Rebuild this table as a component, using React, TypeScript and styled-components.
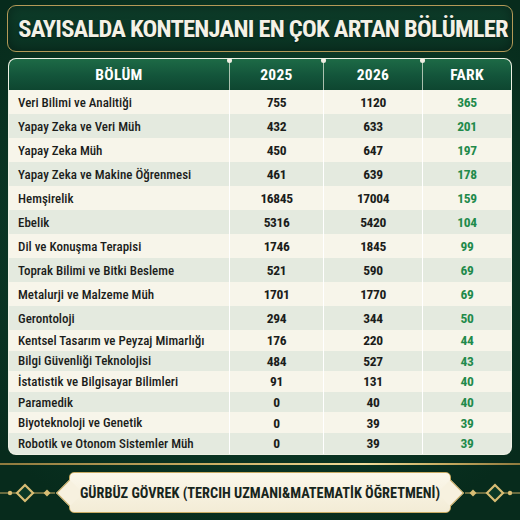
import styled, { createGlobalStyle } from "styled-components";

const GlobalStyle = createGlobalStyle`
    body {
        margin: 0;
        background: #093523;
    }
`;

const Page = styled.div`
    width: 520px;
    height: 520px;
    box-sizing: border-box;
    padding-top: 5px;
    display: flex;
    flex-direction: column;
    overflow: hidden;
    font-family: "Roboto", "Liberation Sans", sans-serif;
    font-stretch: 75%;
    background:
        radial-gradient(ellipse 70% 60% at 50% 45%, #0f4931 0%, #0b3926 55%, #072b1c 100%);
`;

const TitleBox = styled.div`
    margin: 0 7px;
    height: 47px;
    box-sizing: border-box;
    border: 1px solid #b49a58;
    border-radius: 9px;
    display: flex;
    align-items: center;
    justify-content: center;
    padding-left: 6px;
    background: linear-gradient(180deg, #0d3c29 0%, #0a3222 100%);
    box-shadow: inset 0 0 12px rgba(0, 0, 0, 0.35);
`;

const Title = styled.h1`
    margin: 0;
    font-size: 24.5px;
    font-weight: 700;
    letter-spacing: -0.75px;
    color: #f4f1e6;
    white-space: nowrap;
    text-shadow: 0 1px 2px rgba(0, 0, 0, 0.5);
`;

const Table = styled.div`
    margin: 6px 8px 0;
    border: 1px solid rgba(235, 240, 225, 0.75);
    border-radius: 8px;
    overflow: hidden;
    background: #f6f4e9;
`;

const columns = `220px 94px 99px 1fr`;

const HeaderRow = styled.div`
    display: grid;
    grid-template-columns: ${columns};
    height: 31px;
    background: linear-gradient(180deg, #1d6a46 0%, #13543a 55%, #0e4630 100%);
`;

const HeadCell = styled.div<{ $first?: boolean }>`
    position: relative;
    display: flex;
    align-items: center;
    justify-content: center;
    color: #ffffff;
    font-size: 15.5px;
    font-weight: 700;
    letter-spacing: 0.3px;
    border-left: ${(p) => (p.$first ? "none" : "1px solid rgba(235, 240, 225, 0.7)")};

    &::before {
        content: "";
        display: ${(p) => (p.$first ? "none" : "block")};
        position: absolute;
        left: -3px;
        top: -1px;
        width: 5px;
        height: 5px;
        border-radius: 50%;
        background: #f1efe4;
    }
`;

const Row = styled.div<{ $alt: boolean; $compact: boolean }>`
    display: grid;
    grid-template-columns: ${columns};
    height: ${(p) => (p.$compact ? "20.6px" : "24px")};
    background: ${(p) => (p.$alt ? "#e4eadf" : "#f7f5ea")};
`;

const Cell = styled.div<{ $label?: boolean; $green?: boolean }>`
    display: flex;
    align-items: center;
    justify-content: ${(p) => (p.$label ? "flex-start" : "center")};
    padding-left: ${(p) => (p.$label ? "9px" : "0")};
    font-size: ${(p) => (p.$label ? "13px" : "13.5px")};
    font-weight: ${(p) => (p.$label ? 500 : 700)};
    letter-spacing: ${(p) => (p.$label ? "0" : "-0.4px")};
    color: ${(p) => (p.$green ? "#1f8a4b" : "#1b1d1b")};
    border-left: ${(p) => (p.$label ? "none" : "1px solid #ffffff")};
    white-space: nowrap;
`;

const GoldLine = styled.div`
    margin-top: 8px;
    height: 2px;
    background: linear-gradient(90deg, #8f7a3e 0%, #c9ad62 40%, #f2dc9a 70%, #c9ad62 85%, #8f7a3e 100%);
`;

const Footer = styled.div`
    margin-top: 7px;
    height: 42px;
    display: flex;
    align-items: center;
`;

const Ornament = styled.svg`
    flex: none;
    display: block;
`;

const Banner = styled.div`
    position: relative;
    flex: 1;
    min-width: 0;
    height: 41px;
    margin: 0 14px;
    box-sizing: border-box;
    border: 1.5px solid #c9ab63;
    border-radius: 5px;
    background: linear-gradient(180deg, #fbf7ea 0%, #f3ecd6 100%);
    display: flex;
    align-items: center;
    justify-content: center;

    &::before,
    &::after {
        content: "";
        position: absolute;
        top: 50%;
        width: 18px;
        height: 18px;
        background: #f7f1df;
        border: 1.5px solid #c9ab63;
        transform: translateY(-50%) rotate(45deg);
    }
    &::before {
        left: -10px;
        border-top: none;
        border-right: none;
    }
    &::after {
        right: -10px;
        border-bottom: none;
        border-left: none;
    }
`;

const Signature = styled.span`
    position: relative;
    z-index: 1;
    font-size: 14.3px;
    font-weight: 700;
    color: #17251c;
    white-space: nowrap;
`;

type Item = { name: string; a: number; b: number; diff: number };

const rows: Item[] = [
    { name: "Veri Bilimi ve Analitiği", a: 755, b: 1120, diff: 365 },
    { name: "Yapay Zeka ve Veri Müh", a: 432, b: 633, diff: 201 },
    { name: "Yapay Zeka Müh", a: 450, b: 647, diff: 197 },
    { name: "Yapay Zeka ve Makine Öğrenmesi", a: 461, b: 639, diff: 178 },
    { name: "Hemşirelik", a: 16845, b: 17004, diff: 159 },
    { name: "Ebelik", a: 5316, b: 5420, diff: 104 },
    { name: "Dil ve Konuşma Terapisi", a: 1746, b: 1845, diff: 99 },
    { name: "Toprak Bilimi ve Bitki Besleme", a: 521, b: 590, diff: 69 },
    { name: "Metalurji ve Malzeme Müh", a: 1701, b: 1770, diff: 69 },
    { name: "Gerontoloji", a: 294, b: 344, diff: 50 },
    { name: "Kentsel Tasarım ve Peyzaj Mimarlığı", a: 176, b: 220, diff: 44 },
    { name: "Bilgi Güvenliği Teknolojisi", a: 484, b: 527, diff: 43 },
    { name: "İstatistik ve Bilgisayar Bilimleri", a: 91, b: 131, diff: 40 },
    { name: "Paramedik", a: 0, b: 40, diff: 40 },
    { name: "Biyoteknoloji ve Genetik", a: 0, b: 39, diff: 39 },
    { name: "Robotik ve Otonom Sistemler Müh", a: 0, b: 39, diff: 39 },
];

function Flourish({ flip }: { flip?: boolean }) {
    return (
        <Ornament width="55" height="20" viewBox="0 0 55 20" style={flip ? { transform: "scaleX(-1)" } : undefined}>
            <line x1="0" y1="10" x2="55" y2="10" stroke="#c9ab63" strokeWidth="1" />
            <circle cx="10" cy="10" r="2.2" fill="#d8bd74" />
            <path d="M25 2 L33 10 L25 18 L17 10 Z" fill="#0b3926" stroke="#d8bd74" strokeWidth="2.2" />
            <path d="M47 6.5 L50.5 10 L47 13.5 L43.5 10 Z" fill="#d8bd74" />
        </Ornament>
    );
}

export default function App() {
    return (
        <Page>
            <GlobalStyle />
            <TitleBox>
                <Title>SAYISALDA KONTENJANI EN ÇOK ARTAN BÖLÜMLER</Title>
            </TitleBox>
            <Table>
                <HeaderRow>
                    <HeadCell $first>BÖLÜM</HeadCell>
                    <HeadCell>2025</HeadCell>
                    <HeadCell>2026</HeadCell>
                    <HeadCell>FARK</HeadCell>
                </HeaderRow>
                {rows.map((r, i) => (
                    <Row key={r.name} $alt={i % 2 === 1} $compact={i >= 10}>
                        <Cell $label>{r.name}</Cell>
                        <Cell>{r.a}</Cell>
                        <Cell>{r.b}</Cell>
                        <Cell $green>{r.diff}</Cell>
                    </Row>
                ))}
            </Table>
            <GoldLine />
            <Footer>
                <Flourish />
                <Banner>
                    <Signature>GÜRBÜZ GÖVREK (TERCIH UZMANI&amp;MATEMATİK ÖĞRETMENİ)</Signature>
                </Banner>
                <Flourish flip />
            </Footer>
        </Page>
    );
}
